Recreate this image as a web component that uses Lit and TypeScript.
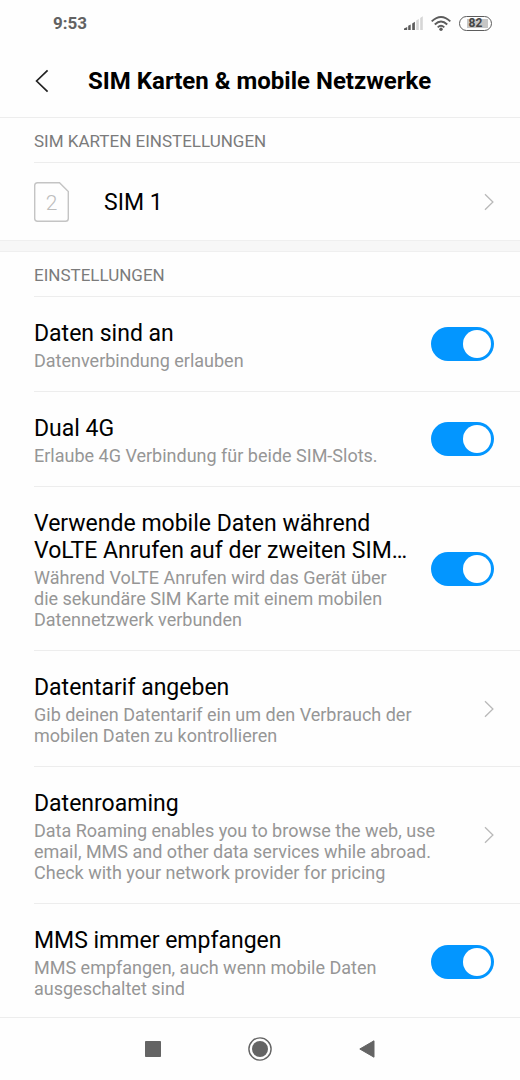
import { LitElement, html, css, svg, nothing } from "lit";
import { customElement, property, state } from "lit/decorators.js";

interface Setting {
  id: string;
  title: string;
  text: string;
  kind: "switch" | "link";
}

const SETTINGS: Setting[] = [
  { id: "data", title: "Daten sind an", text: "Datenverbindung erlauben", kind: "switch" },
  { id: "dual", title: "Dual 4G", text: "Erlaube 4G Verbindung für beide SIM-Slots.", kind: "switch" },
  {
    id: "volte",
    title: "Verwende mobile Daten während VoLTE Anrufen auf der zweiten SIM…",
    text: "Während VoLTE Anrufen wird das Gerät über die sekundäre SIM Karte mit einem mobilen Datennetzwerk verbunden",
    kind: "switch",
  },
  {
    id: "plan",
    title: "Datentarif angeben",
    text: "Gib deinen Datentarif ein um den Verbrauch der mobilen Daten zu kontrollieren",
    kind: "link",
  },
  {
    id: "roaming",
    title: "Datenroaming",
    text: "Data Roaming enables you to browse the web, use email, MMS and other data services while abroad. Check with your network provider for pricing",
    kind: "link",
  },
  {
    id: "mms",
    title: "MMS immer empfangen",
    text: "MMS empfangen, auch wenn mobile Daten ausgeschaltet sind",
    kind: "switch",
  },
];

const chevron = html`<svg class="chevron" width="10" height="18" viewBox="0 0 10 18" aria-hidden="true">
  ${svg`<path d="M1 1.2 8.9 9 1 16.8" fill="none" stroke="#b9b9b9" stroke-width="1.3"/>`}
</svg>`;

@customElement("setting-row")
export class SettingRow extends LitElement {
  @property({ attribute: false }) setting!: Setting;
  @state() private on = true;

  static styles = css`
    :host {
      display: block;
    }
    .row {
      display: flex;
      align-items: center;
      gap: 20px;
      padding-right: 26px;
      color: #000;
      text-decoration: none;
    }
    .copy {
      flex: 1;
      min-width: 0;
      padding: 23px 0 20px;
    }
    .title {
      display: block;
      margin-bottom: 3px;
      font-size: 23px;
      line-height: 27px;
    }
    .text {
      display: block;
      font-size: 18px;
      line-height: 21px;
      color: #969696;
    }
    .switch {
      appearance: none;
      flex: none;
      display: flex;
      box-sizing: border-box;
      width: 63px;
      height: 34px;
      margin: 0;
      padding: 3px;
      border-radius: 17px;
      background: #c8c8c8;
      cursor: pointer;
    }
    .switch::before {
      content: "";
      width: 28px;
      height: 28px;
      border-radius: 50%;
      background: #fff;
    }
    .switch:checked {
      justify-content: flex-end;
      background: #0396ff;
    }
    .chevron {
      flex: none;
      display: block;
    }
  `;

  render() {
    const s = this.setting;
    if (!s) return nothing;
    const copy = html`<span class="copy">
      <span class="title">${s.title}</span>
      <span class="text">${s.text}</span>
    </span>`;
    if (s.kind === "link") {
      return html`<a class="row" href="#${s.id}">${copy}${chevron}</a>`;
    }
    return html`<label class="row" for=${s.id}>
      ${copy}
      <input
        class="switch"
        id=${s.id}
        type="checkbox"
        role="switch"
        .checked=${this.on}
        @change=${(e: Event) => (this.on = (e.target as HTMLInputElement).checked)}
      />
    </label>`;
  }
}

@customElement("app-root")
export class AppRoot extends LitElement {
  static styles = css`
    :host {
      display: flex;
      flex-direction: column;
      height: 100vh;
      background: #fefefe;
      color: #000;
      font-family: Roboto, "Noto Sans", sans-serif;
    }
    .status {
      flex: none;
      display: flex;
      align-items: center;
      justify-content: space-between;
      height: 46px;
      padding: 0 28px 0 53px;
      font-size: 17px;
      font-weight: 700;
      color: #626262;
    }
    .indicators {
      display: flex;
      align-items: center;
      gap: 8px;
    }
    .battery {
      display: flex;
      align-items: center;
      justify-content: center;
      box-sizing: border-box;
      width: 33px;
      height: 15px;
      border: 1px solid #5c5c5c;
      border-radius: 8px;
      background: linear-gradient(#c6c6c6, #c6c6c6) 7px 2px / 21px 9px no-repeat;
      font-size: 12px;
      line-height: 13px;
      font-weight: 700;
      color: #444;
    }
    .header {
      flex: none;
      display: flex;
      align-items: center;
      height: 69px;
      padding: 0 26px 2px;
      border-bottom: 1px solid #ededed;
    }
    .back {
      display: flex;
      align-items: center;
      width: 62px;
      height: 48px;
      padding: 0 0 0 9px;
      border: 0;
      background: none;
      cursor: pointer;
    }
    .heading {
      margin: 0;
      font-size: 24px;
      line-height: 28px;
      font-weight: 700;
    }
    .content {
      flex: 1;
      min-height: 0;
      overflow-y: auto;
      scrollbar-width: none;
    }
    .section {
      padding-left: 34px;
    }
    .label {
      margin: 0;
      padding-top: 2px;
      font-size: 17px;
      line-height: 42px;
      font-weight: 400;
      color: #7b7b7b;
      border-bottom: 1px solid #ededed;
    }
    .sim {
      display: flex;
      align-items: center;
      height: 77px;
      padding-right: 26px;
      color: #000;
      text-decoration: none;
    }
    .card {
      flex: none;
      margin-right: 35px;
    }
    .name {
      flex: 1;
      padding-top: 2px;
      font-size: 23px;
      line-height: 27px;
    }
    .band {
      height: 10px;
      background: #f7f7f7;
      border-top: 1px solid #efefef;
      border-bottom: 1px solid #efefef;
    }
    .list {
      list-style: none;
      margin: 0;
      padding: 0;
    }
    .item + .item {
      border-top: 1px solid #ededed;
    }
    .nav {
      flex: none;
      display: flex;
      justify-content: center;
      border-top: 1px solid #ededed;
    }
    .key {
      display: flex;
      align-items: center;
      justify-content: center;
      width: 107px;
      height: 62px;
      padding: 0;
      border: 0;
      background: none;
      cursor: pointer;
    }
  `;

  render() {
    return html`
      <div class="status">
        <span>9:53</span>
        <span class="indicators">
          <svg width="20" height="15" viewBox="0 0 20 15" aria-hidden="true">
            <path d="M1 14V12.400L4.200 11V14Z M5.200 14V9.800L7.700 8.600V14Z M9.200 14V7.400L11.900 5.800V14Z" fill="#5c5c5c" />
            <path d="M13.200 14V4.600L15.800 3V14Z M17.200 14V1.900L19.800 0.300V14Z" fill="#d6d6d6" />
          </svg>
          <svg width="20" height="15" viewBox="0 0 20 15" aria-hidden="true">
            <g fill="none" stroke="#5c5c5c" stroke-width="1.900">
              <path d="M0.700 5.400Q10 -3.400 19.300 5.400" />
              <path d="M3.800 8.500Q10 2.700 16.200 8.500" />
              <path d="M6.700 11.400Q10 8.300 13.300 11.400" />
            </g>
            <circle cx="10" cy="13.200" r="1.700" fill="#5c5c5c" />
          </svg>
          <span class="battery">82</span>
        </span>
      </div>
      <header class="header">
        <button class="back" aria-label="Zurück">
          <svg width="14" height="24" viewBox="0 0 14 24" aria-hidden="true">
            <path d="M12.600 1.400 1.600 12 12.600 22.600" fill="none" stroke="#222" stroke-width="1.700" />
          </svg>
        </button>
        <h1 class="heading">SIM Karten &amp; mobile Netzwerke</h1>
      </header>
      <main class="content">
        <section class="section">
          <h2 class="label">SIM KARTEN EINSTELLUNGEN</h2>
          <a class="sim" href="#sim1">
            <svg class="card" width="35" height="40" viewBox="0 0 35 40" aria-hidden="true">
              <path
                d="M3.500 0.700H25.500L34.300 9.500V36.500Q34.300 39.300 31.500 39.300H3.500Q0.700 39.300 0.700 36.500V3.500Q0.700 0.700 3.500 0.700Z"
                fill="none"
                stroke="#c4c4c4"
                stroke-width="1.400"
              />
              <text x="17.500" y="28" text-anchor="middle" font-size="21" font-weight="300" fill="#bdbdbd">2</text>
            </svg>
            <span class="name">SIM 1</span>
            ${chevron}
          </a>
        </section>
        <div class="band"></div>
        <section class="section">
          <h2 class="label">EINSTELLUNGEN</h2>
          <ul class="list">
            ${SETTINGS.map((s) => html`<li class="item"><setting-row .setting=${s}></setting-row></li>`)}
          </ul>
        </section>
      </main>
      <nav class="nav" aria-label="Navigation">
        <button class="key" aria-label="Übersicht">
          <svg width="16" height="16" viewBox="0 0 16 16"><rect width="16" height="16" rx="0.800" fill="#646464" /></svg>
        </button>
        <button class="key" aria-label="Startseite">
          <svg width="24" height="24" viewBox="0 0 24 24">
            <circle cx="12" cy="12" r="11.100" fill="none" stroke="#646464" stroke-width="1.400" />
            <circle cx="12" cy="12" r="8" fill="#646464" />
          </svg>
        </button>
        <button class="key" aria-label="Zurück">
          <svg width="16" height="18" viewBox="0 0 16 18">
            <path d="M0.800 9 15 0.800V17.200Z" fill="#646464" stroke="#646464" stroke-linejoin="round" />
          </svg>
        </button>
      </nav>
    `;
  }
}
